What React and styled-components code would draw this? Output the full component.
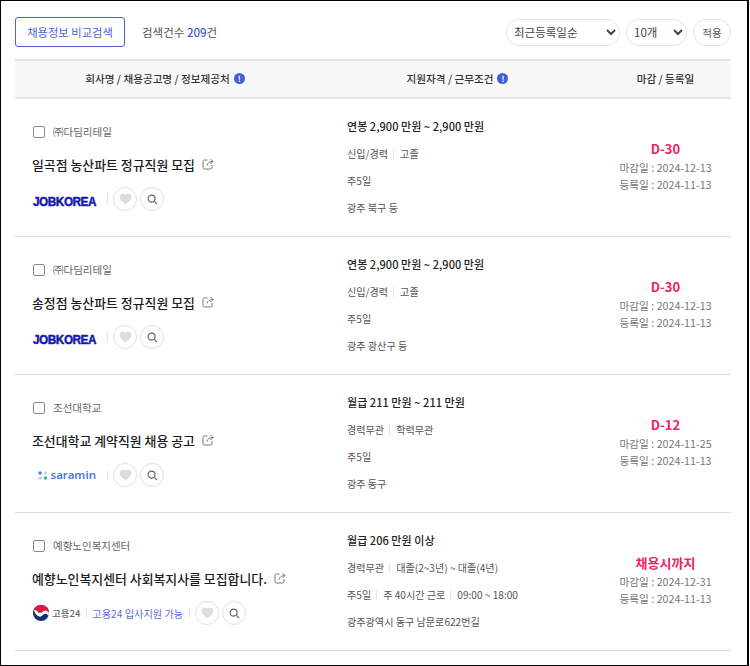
import React from 'react';
import styled, { createGlobalStyle } from 'styled-components';

const Global = createGlobalStyle`
  html, body { margin: 0; padding: 0; background: #fff; }
  body { font-family: "Noto Sans CJK KR", "Noto Sans", sans-serif; color: #222; }
  * { box-sizing: border-box; }
`;
const Frame = styled.div`
  width: 749px; height: 666px; border: solid #000; border-width: 1px 2px 1px 1px;
  padding: 16px 16px 0 14px; overflow: hidden; background: #fff;
`;
const Toolbar = styled.div`display: flex; align-items: center; height: 30px; margin-bottom: 12px;`;
const CompareButton = styled.button`
  width: 110px; height: 30px; border: 1px solid #4a64d6; border-radius: 3px; background: #fff;
  color: #4a64d6; font: 400 11.3px "Noto Sans CJK KR", sans-serif; padding: 0;
`;
const Count = styled.div`margin-left: 17px; font-size: 11.5px; color: #555;`;
const CountNum = styled.b`color: #3f5bd0; font-weight: 500;`;
const Controls = styled.div`margin-left: auto; display: flex; align-items: center; gap: 6px;`;
const Select = styled.select`
  width: ${p => p.$w}px; height: 27px; border: 1px solid #e2e2e2; border-radius: 14px; background: #fff;
  padding: 0 2px 0 3px; font: 400 11.5px "Noto Sans CJK KR", sans-serif; color: #444; outline: none;
`;
const Apply = styled.button`
  width: 38px; height: 27px; border: 1px solid #e2e2e2; border-radius: 14px; background: #fff;
  font: 400 10.5px "Noto Sans CJK KR", sans-serif; color: #555; padding: 0;
`;
const Head = styled.div`
  display: grid; grid-template-columns: 300px 285px 131px; height: 40px; padding-bottom: 1px;
  background: #f8f8f8; border-top: 2px solid #e6e6e6; border-bottom: 2px solid #e6e6e6;
`;
const HeadCell = styled.div`
  display: flex; align-items: center; justify-content: center; gap: 4px;
  font-size: 10.6px; font-weight: 500; color: #333;
`;
const Info = styled.span`
  width: 11px; height: 11px; border-radius: 50%; background: #3f5fd8; color: #fff;
  font-size: 8px; font-weight: 700; line-height: 11px; text-align: center; display: inline-block;
`;
const Row = styled.div`
  display: grid; grid-template-columns: 300px 285px 131px; height: 138px;
  border-bottom: 1px solid #dedede;
`;
const Main = styled.div`display: flex; flex-direction: column; padding: 26px 0 0 18px;`;
const CompanyLine = styled.div`display: flex; align-items: center; gap: 7px; height: 14px;`;
const Check = styled.span`
  width: 12px; height: 12px; border: 1px solid #8a8a8a; border-radius: 2px; background: #fff; flex: none;
  margin-right: 1px;
`;
const Company = styled.span`font-size: 10.5px; color: #666; line-height: 14px;`;
const Title = styled.div`
  margin: 15px 0 0 -1px; display: flex; align-items: center; gap: 7px; height: 20px;
  font-size: 12.9px; font-weight: 500; color: #1c1c1c; white-space: nowrap;
`;
const Meta = styled.div`margin-top: 12px; display: flex; align-items: center; height: 26px;`;
const Sep = styled.span`
  width: 1px; height: 10px; background: #e4e4e4; flex: none;
  margin: 0 ${p => p.$r ?? 5}px 0 ${p => p.$l ?? 5}px;
`;
const JobkoreaBox = styled.span`width: 64px; flex: none; overflow: visible; display: block;`;
const Jobkorea = styled.span`
  display: inline-block; font: 700 13.5px/1 "Liberation Sans", Arial, sans-serif; color: #1b10d8;
  letter-spacing: -0.4px; -webkit-text-stroke: 0.4px #1b10d8; text-shadow: 1px 0 0 #b6f000;
  white-space: nowrap; transform: scaleX(.86); transform-origin: left center;
`;
const SaraminWrap = styled.span`width: 58px; display: flex; align-items: center; gap: 3px; margin-left: 5px; flex: none;`;
const SaraminText = styled.span`font: 600 11.5px/1 "Noto Sans", sans-serif; color: #4a78e0;`;
const GovWrap = styled.span`display: flex; align-items: center; gap: 3px;`;
const GovText = styled.span`font-size: 9.5px; font-weight: 500; color: #666; white-space: nowrap;`;
const ApplyNote = styled.span`font-size: 10.2px; color: #5a6fe0; white-space: nowrap;`;
const Circle = styled.span`
  width: 24px; height: 24px; border: 1px solid #e0e0e0; border-radius: 50%; margin-right: 3px;
  display: flex; align-items: center; justify-content: center; flex: none; background: #fff;
`;
const Quals = styled.div`display: flex; flex-direction: column; padding: 14px 0 0 32px;`;
const QLine = styled.div`
  height: 27px; display: flex; align-items: center; font-size: 10.1px; color: #555; white-space: nowrap;
`;
const Pay = styled(QLine)`font-size: 11px; font-weight: 500; color: #222; padding-bottom: 2px; letter-spacing: 0.05px;`;
const Dates = styled.div`display: flex; flex-direction: column; align-items: center; padding-top: 40px;`;
const Dday = styled.div`font-size: 13px; font-weight: 700; color: #f0245f; line-height: 20px;`;
const DateLine = styled.div`font-size: 10.7px; color: #777; line-height: 17px; white-space: nowrap;`;

const External = () => (
  <svg width="12" height="12" viewBox="0 0 12 12" fill="none" stroke="#777" strokeWidth="1">
    <path d="M5.5 2H2.5A1.5 1.5 0 0 0 1 3.5v6A1.5 1.5 0 0 0 2.500 11h6A1.500 1.500 0 0 0 10 9.500V7" />
    <path d="M5 7.500C5.500 5 7.500 3.500 11 3.500M8.500 1L11 3.500 8.500 6" />
  </svg>
);
const Heart = () => (
  <svg width="13" height="12" viewBox="0 0 24 22" fill="#dcdcdc">
    <path d="M12 21C5 15.500 1 12 1 7a6 6 0 0 1 11-3.300A6 6 0 0 1 23 7c0 5-4 8.500-11 14z" />
  </svg>
);
const Search = () => (
  <svg width="11" height="11" viewBox="0 0 12 12" fill="none" stroke="#666" strokeWidth="1.300">
    <circle cx="5" cy="5" r="3.800" /><path d="M8 8l3 3" />
  </svg>
);
const Dots = () => (
  <svg width="11" height="11" viewBox="0 0 11 11">
    <circle cx="2.500" cy="2.500" r="2" fill="#4a78e0" /><circle cx="8.500" cy="2.500" r="1.600" fill="#c6cbd6" />
    <circle cx="2.500" cy="8.500" r="2" fill="#c6cbd6" /><circle cx="8.500" cy="8.500" r="2" fill="#22c9a0" />
  </svg>
);
const Taegeuk = () => (
  <svg width="16" height="16" viewBox="0 0 16 16">
    <circle cx="8" cy="8" r="8" fill="#12306e" />
    <path d="M1.500 3.300A8 8 0 0 1 16 8c-1-2.500-4-3.500-6-1.500C8 8.500 5.500 8 4.500 6.500 3.800 5.500 2.800 5 1 5z" fill="#d81e3a" />
    <path d="M1 5c1.800 0 2.800.500 3.500 1.500C5.500 8 8 8.500 10 6.500c2-2 5-1 6 1.500 0 1-.3 2-.7 3-.5-2-2.800-3.300-4.800-1.500-1.500 1.500-2.500 2.500-4.500 2S2 9 1 5z" fill="#fff" />
  </svg>
);

const jobs = [
  { company: '㈜다딤리테일', title: '일곡점 농산파트 정규직원 모집', logo: 'job', pay: '연봉 2,900 만원 ~ 2,900 만원', q: ['신입/경력', '고졸'], work: ['주5일'], loc: '광주 북구 등', d: 'D-30', end: '2024-12-13' },
  { company: '㈜다딤리테일', title: '송정점 농산파트 정규직원 모집', logo: 'job', pay: '연봉 2,900 만원 ~ 2,900 만원', q: ['신입/경력', '고졸'], work: ['주5일'], loc: '광주 광산구 등', d: 'D-30', end: '2024-12-13' },
  { company: '조선대학교', title: '조선대학교 계약직원 채용 공고', logo: 'sara', pay: '월급 211 만원 ~ 211 만원', q: ['경력무관', '학력무관'], work: ['주5일'], loc: '광주 동구', d: 'D-12', end: '2024-11-25' },
  { company: '예향노인복지센터', title: '예향노인복지센터 사회복지사를 모집합니다.', logo: 'gov', pay: '월급 206 만원 이상', q: ['경력무관', '대졸(2~3년) ~ 대졸(4년)'], work: ['주5일', '주 40시간 근로', '09:00 ~ 18:00'], loc: '광주광역시 동구 남문로622번길', d: '채용시까지', end: '2024-12-31' },
];

const Joined = ({ items }) => items.map((t, i) => (
  <React.Fragment key={t}>{i > 0 && <Sep $l={5} $r={6} />}{t}</React.Fragment>
));

const Logo = ({ kind }) => {
  if (kind === 'job') return <><JobkoreaBox><Jobkorea>JOBKOREA</Jobkorea></JobkoreaBox><Sep $l={10} $r={5} /></>;
  if (kind === 'sara') return <><SaraminWrap><Dots /><SaraminText>saramin</SaraminText></SaraminWrap><Sep $l={11} $r={5} /></>;
  return (
    <>
      <GovWrap><Taegeuk /><GovText>고용24</GovText></GovWrap>
      <Sep $l={6} $r={5} />
      <ApplyNote>고용24 입사지원 가능</ApplyNote>
      <Sep $l={6} $r={5} />
    </>
  );
};

export default function App() {
  return (
    <Frame>
      <Global />
      <Toolbar>
        <CompareButton>채용정보 비교검색</CompareButton>
        <Count>검색건수 <CountNum>209</CountNum>건</Count>
        <Controls>
          <Select $w={114} defaultValue="a"><option value="a">최근등록일순</option></Select>
          <Select $w={61} defaultValue="a"><option value="a">10개</option></Select>
          <Apply>적용</Apply>
        </Controls>
      </Toolbar>
      <Head>
        <HeadCell>회사명 / 채용공고명 / 정보제공처 <Info>!</Info></HeadCell>
        <HeadCell>지원자격 / 근무조건 <Info>!</Info></HeadCell>
        <HeadCell>마감 / 등록일</HeadCell>
      </Head>
      {jobs.map(j => (
        <Row key={j.title}>
          <Main>
            <CompanyLine><Check /><Company>{j.company}</Company></CompanyLine>
            <Title>{j.title} <External /></Title>
            <Meta>
              <Logo kind={j.logo} />
              <Circle><Heart /></Circle>
              <Circle><Search /></Circle>
            </Meta>
          </Main>
          <Quals>
            <Pay>{j.pay}</Pay>
            <QLine><Joined items={j.q} /></QLine>
            <QLine><Joined items={j.work} /></QLine>
            <QLine>{j.loc}</QLine>
          </Quals>
          <Dates>
            <Dday>{j.d}</Dday>
            <DateLine>마감일 : {j.end}</DateLine>
            <DateLine>등록일 : 2024-11-13</DateLine>
          </Dates>
        </Row>
      ))}
    </Frame>
  );
}
